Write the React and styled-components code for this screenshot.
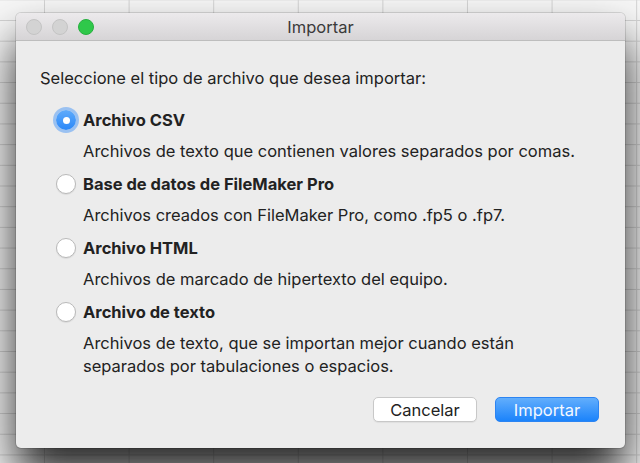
import React from "react";
import styled, { createGlobalStyle } from "styled-components";

const Global = createGlobalStyle`
  html, body { margin: 0; padding: 0; }
  body {
    width: 640px;
    height: 463px;
    overflow: hidden;
    background-color: #f7f7f7;
    background-image:
      linear-gradient(to right, #d4d4d4 1px, transparent 1px),
      linear-gradient(to bottom, #d4d4d4 1px, transparent 1px);
    background-size: 84.6px 20.7px;
    background-position: 44px 20px;
    font-family: Inter, "Noto Sans", "Liberation Sans", sans-serif;
  }
`;

const Window = styled.div`
  margin: 13px 0 0 16px;
  width: 609px;
  height: 435px;
  border-radius: 5px;
  overflow: hidden;
  display: flex;
  flex-direction: column;
  background: #ececec;
  box-shadow: 0 0 0 1px rgba(0, 0, 0, 0.12), 0 28px 46px rgba(0, 0, 0, 0.85);
`;

const TitleBar = styled.div`
  height: 27px;
  flex: none;
  display: grid;
  grid-template-columns: 1fr auto 1fr;
  align-items: center;
  padding: 0 10px;
  background: linear-gradient(to bottom, #eceaec, #d6d4d6);
  border-bottom: 1px solid #bdbdbd;
`;

const Lights = styled.div`
  display: flex;
  gap: 10px;
`;

const Light = styled.span`
  width: 16px;
  height: 16px;
  border-radius: 50%;
  box-sizing: border-box;
  background: ${(p) => (p.$on ? "#2fc84a" : "#d3d3d3")};
  border: 1px solid ${(p) => (p.$on ? "#27b03f" : "#c4c4c4")};
`;

const Title = styled.div`
  font-size: 16.5px;
  color: #3a3a3a;
`;

const Body = styled.div`
  flex: 1;
  display: flex;
  flex-direction: column;
  padding: 27px 24px 0 24px;
  color: #222;
`;

const Prompt = styled.div`
  font-size: 16.5px;
  line-height: 20px;
  margin-bottom: 21px;
`;

const Options = styled.div`
  display: flex;
  flex-direction: column;
  gap: 10px;
  padding-left: 16px;
`;

const Option = styled.label`
  display: grid;
  grid-template-columns: 22px 1fr;
  column-gap: 5px;
  row-gap: 9px;
  align-items: center;
`;

const Radio = styled.span`
  width: 20px;
  height: 20px;
  border-radius: 50%;
  box-sizing: border-box;
  display: flex;
  align-items: center;
  justify-content: center;
  ${(p) =>
    p.$checked
      ? `
    background: linear-gradient(to bottom, #5fabfb, #2b88f8);
    box-shadow: 0 0 0 3px rgba(110, 170, 245, 0.65);
    &::after {
      content: "";
      width: 7px;
      height: 7px;
      border-radius: 50%;
      background: #fff;
    }
  `
      : `
    background: #fff;
    border: 1px solid #b9b9b9;
    box-shadow: 0 1px 1px rgba(0,0,0,0.08);
  `}
`;

const Label = styled.span`
  font-size: 16.5px;
  font-weight: 700;
  line-height: 22px;
`;

const Desc = styled.span`
  grid-column: 2;
  font-size: 16.5px;
  line-height: 23px;
`;

const Buttons = styled.div`
  margin-top: auto;
  margin-bottom: 26px;
  display: flex;
  justify-content: flex-end;
  gap: 18px;
  padding-right: 2px;
`;

const Button = styled.button`
  width: 104px;
  height: 25px;
  border-radius: 5px;
  font-family: inherit;
  font-size: 16.5px;
  padding: 0;
  ${(p) =>
    p.$primary
      ? `
    color: #f4f8ff;
    border: 1px solid #2c84f2;
    background: linear-gradient(to bottom, #62aefc, #1b83fb);
  `
      : `
    color: #222;
    border: 1px solid #c8c8c8;
    background: #fff;
    box-shadow: 0 1px 1px rgba(0,0,0,0.06);
  `}
`;

const options = [
  { label: "Archivo CSV", desc: "Archivos de texto que contienen valores separados por comas.", checked: true },
  { label: "Base de datos de FileMaker Pro", desc: "Archivos creados con FileMaker Pro, como .fp5 o .fp7." },
  { label: "Archivo HTML", desc: "Archivos de marcado de hipertexto del equipo." },
  {
    label: "Archivo de texto",
    desc: (
      <>
        Archivos de texto, que se importan mejor cuando están
        <br />
        separados por tabulaciones o espacios.
      </>
    ),
  },
];

export default function App() {
  return (
    <>
      <Global />
      <Window>
        <TitleBar>
          <Lights>
            <Light />
            <Light />
            <Light $on />
          </Lights>
          <Title>Importar</Title>
          <span />
        </TitleBar>
        <Body>
          <Prompt>Seleccione el tipo de archivo que desea importar:</Prompt>
          <Options>
            {options.map((o, i) => (
              <Option key={i}>
                <Radio $checked={o.checked} />
                <Label>{o.label}</Label>
                <Desc>{o.desc}</Desc>
              </Option>
            ))}
          </Options>
          <Buttons>
            <Button>Cancelar</Button>
            <Button $primary>Importar</Button>
          </Buttons>
        </Body>
      </Window>
    </>
  );
}
